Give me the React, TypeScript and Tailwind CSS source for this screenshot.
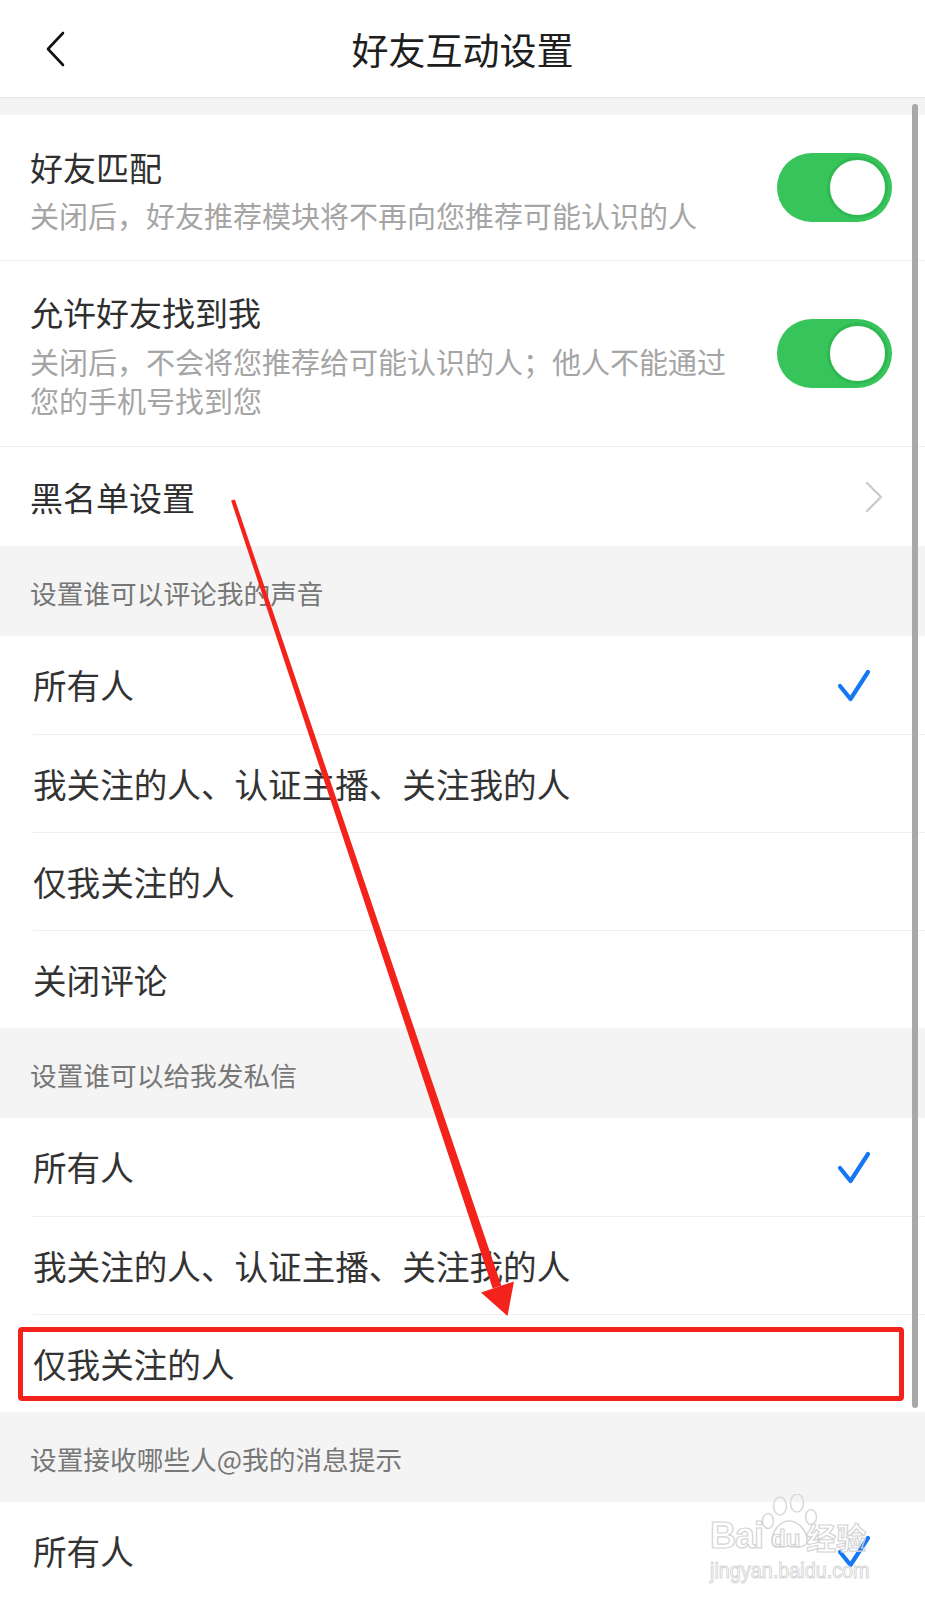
import React from 'react'

const FONT = "font-['Noto_Sans_CJK_SC',sans-serif]"

const Toggle = () => {
  return (
    <div className="relative w-[115px] h-[69px] rounded-full bg-[#37c45a] shrink-0">
      <div className="absolute right-[4px] top-[4px] w-[61px] h-[61px] rounded-full bg-white border-[3px] border-[#30b853]" />
    </div>
  )
}

const Check = () => {
  return (
    <svg width="36" height="36" viewBox="0 0 36 36" fill="none">
      <path d="M5 19L15.5 32L33 5" stroke="#1677f2" strokeWidth={4.2} strokeLinecap="round" strokeLinejoin="round" />
    </svg>
  )
}

function SectionHeader({ text }: { text: string }) {
  return (
    <div className="h-[90px] bg-[#f4f4f4] flex items-center pl-[30px] pt-[4px]">
      <span className="text-[26.7px] leading-[36px] text-[#777]">{text}</span>
    </div>
  )
}

function Option({ text, checked, first, boxed }: { text: string; checked?: boolean; first?: boolean; boxed?: boolean }) {
  return (
    <div className="relative bg-white">
      <div className={"ml-[33px] h-[98px] flex items-center justify-between pr-[54px] " + (first ? "" : "border-t border-[#efefef]")}>
        <span className="text-[33.6px] leading-[40px] text-[#333]">{text}</span>
        {checked ? <Check /> : null}
      </div>
      {boxed ? (
        <div className="absolute left-[18px] top-[13px] w-[886px] h-[74px] rounded-[4px] border-[5px] border-[#f3231b]" />
      ) : null}
    </div>
  )
}

const Watermark = () => {
  return (
    <div className="absolute left-[708px] top-[1494px] w-[175px] h-[95px] pointer-events-none">
      <svg className="absolute left-[54px] top-[0px]" width="58" height="56" viewBox="0 0 58 56" fill="none" stroke="#d8d8d8" strokeWidth="1.5">
        <ellipse cx="18" cy="12" rx="6.5" ry="9" />
        <ellipse cx="35" cy="9" rx="6.5" ry="9" />
        <ellipse cx="6" cy="27" rx="5.5" ry="7.5" />
        <ellipse cx="49" cy="23" rx="5.5" ry="7.5" />
        <path d="M10 47C10 36 19 27 27 27C36 27 45 36 45 47C45 53 38 54 27 52C16 54 10 53 10 47Z" />
      </svg>
      <div className="absolute left-[2px] top-[24px] flex items-end">
        <span className="font-['Liberation_Sans',sans-serif] text-[36px] leading-[36px] font-bold text-transparent [-webkit-text-stroke:1.2px_#d4d4d4] tracking-[-1px]">Bai</span>
        <span className="ml-[8px] font-['Liberation_Sans',sans-serif] text-[24px] leading-[30px] font-bold text-transparent [-webkit-text-stroke:1.2px_#d4d4d4]">du</span>
        <span className="ml-[6px] text-[30px] leading-[36px] font-bold text-transparent [-webkit-text-stroke:1.2px_#d4d4d4]">经验</span>
      </div>
      <div className="absolute left-[2px] top-[66px] font-['Liberation_Sans',sans-serif] text-[22px] leading-[22px] text-transparent [-webkit-text-stroke:1px_#d6d6d6] scale-x-[0.9] origin-left">jingyan.baidu.com</div>
    </div>
  )
}

export default function App() {
  return (
    <div className={"relative w-[925px] h-[1600px] overflow-hidden bg-white " + FONT}>
      {/* top bar */}
      <div className="relative h-[98px] bg-white border-b border-[#e6e6e6] flex items-center justify-center">
        <svg className="absolute left-[40px] top-[26px]" width="30" height="46" viewBox="0 0 30 46" fill="none">
          <path d="M23 7L8 23L23 39" stroke="#111" strokeWidth={2.6} strokeLinecap="round" strokeLinejoin="round" />
        </svg>
        <span className="text-[37px] leading-[44px] text-[#1e1e1e]">好友互动设置</span>
      </div>
      <div className="h-[17px] bg-[#f4f4f4]" />

      {/* toggles */}
      <div className="h-[146px] bg-white border-b border-[#ececec] flex items-center justify-between pl-[30px] pr-[33px]">
        <div className="pt-[6px]">
          <div className="text-[33px] leading-[40px] text-[#2f2f2f]">好友匹配</div>
          <div className="mt-[8px] text-[29px] leading-[40px] text-[#a5a5a5]">关闭后，好友推荐模块将不再向您推荐可能认识的人</div>
        </div>
        <Toggle />
      </div>
      <div className="h-[186px] bg-white border-b border-[#ececec] flex items-center justify-between pl-[30px] pr-[33px]">
        <div className="pt-[4px]">
          <div className="text-[33px] leading-[40px] text-[#2f2f2f]">允许好友找到我</div>
          <div className="mt-[10px] text-[29px] leading-[39px] text-[#a5a5a5]">
            <div>关闭后，不会将您推荐给可能认识的人；他人不能通过</div>
            <div>您的手机号找到您</div>
          </div>
        </div>
        <Toggle />
      </div>
      <div className="h-[99px] bg-white flex items-center justify-between pl-[30px] pr-[40px]">
        <span className="text-[33px] leading-[40px] text-[#2f2f2f]">黑名单设置</span>
        <svg width="22" height="34" viewBox="0 0 22 34" fill="none">
          <path d="M4 3L18 17L4 31" stroke="#c9c9c9" strokeWidth={2.2} strokeLinecap="round" strokeLinejoin="round" />
        </svg>
      </div>

      <SectionHeader text="设置谁可以评论我的声音" />
      <Option text="所有人" checked first />
      <Option text="我关注的人、认证主播、关注我的人" />
      <Option text="仅我关注的人" />
      <Option text="关闭评论" />

      <SectionHeader text="设置谁可以给我发私信" />
      <Option text="所有人" checked first />
      <Option text="我关注的人、认证主播、关注我的人" />
      <Option text="仅我关注的人" boxed />

      <SectionHeader text="设置接收哪些人@我的消息提示" />
      <Option text="所有人" checked first />

      {/* scrollbar */}
      <div className="absolute right-[7px] top-[104px] w-[6px] h-[1304px] rounded-full bg-[#a8a8a8]" />

      <Watermark />

      {/* red annotation arrow */}
      <svg className="absolute left-0 top-0 pointer-events-none" width="925" height="1600" viewBox="0 0 925 1600">
        <polygon points="234.9,499.4 231.1,500.6 492.7,1288.4 501.3,1285.6" fill="#f3231b" />
        <polygon points="481,1292.5 514,1281.5 507.5,1316" fill="#f3231b" />
      </svg>
    </div>
  )
}
